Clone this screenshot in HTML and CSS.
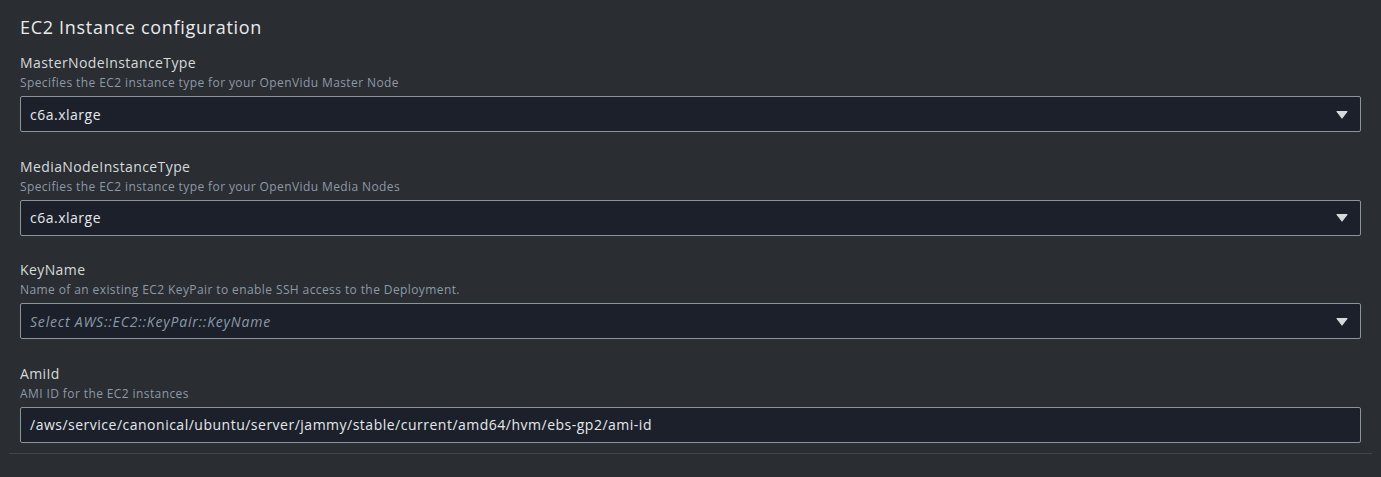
FILE: index.html
```html
<!DOCTYPE html>
<html lang="en">
<head>
<meta charset="utf-8">
<title>EC2 Instance configuration</title>
<link rel="stylesheet" href="styles.css">
</head>
<body>
<section class="panel">
  <h2 class="panel-title">EC2 Instance configuration</h2>
  <div class="fields">
    <div class="field">
      <div class="field-label">MasterNodeInstanceType</div>
      <div class="field-desc">Specifies the EC2 instance type for your OpenVidu Master Node</div>
      <div class="control select">
        <span class="value">c6a.xlarge</span>
        <svg class="caret" width="12" height="9" viewBox="0 0 12 9"><path d="M1 1.5 H11 L6 8 Z" fill="currentColor" stroke="currentColor" stroke-width="1.2" stroke-linejoin="round"/></svg>
      </div>
    </div>
    <div class="field">
      <div class="field-label">MediaNodeInstanceType</div>
      <div class="field-desc">Specifies the EC2 instance type for your OpenVidu Media Nodes</div>
      <div class="control select">
        <span class="value">c6a.xlarge</span>
        <svg class="caret" width="12" height="9" viewBox="0 0 12 9"><path d="M1 1.5 H11 L6 8 Z" fill="currentColor" stroke="currentColor" stroke-width="1.2" stroke-linejoin="round"/></svg>
      </div>
    </div>
    <div class="field">
      <div class="field-label">KeyName</div>
      <div class="field-desc">Name of an existing EC2 KeyPair to enable SSH access to the Deployment.</div>
      <div class="control select">
        <span class="value placeholder">Select AWS::EC2::KeyPair::KeyName</span>
        <svg class="caret" width="12" height="9" viewBox="0 0 12 9"><path d="M1 1.5 H11 L6 8 Z" fill="currentColor" stroke="currentColor" stroke-width="1.2" stroke-linejoin="round"/></svg>
      </div>
    </div>
    <div class="field">
      <div class="field-label">AmiId</div>
      <div class="field-desc">AMI ID for the EC2 instances</div>
      <div class="control">
        <span class="value">/aws/service/canonical/ubuntu/server/jammy/stable/current/amd64/hvm/ebs-gp2/ami-id</span>
      </div>
    </div>
  </div>
</section>
</body>
</html>
```

FILE: styles.css
```css
html, body {
  margin: 0;
  padding: 0;
  background: #2a2d32;
  height: 100%;
}

body {
  font-family: "Open Sans", "Noto Sans", sans-serif;
  color: #d5dbdb;
}

.panel {
  margin: 0 9px;
  padding: 14px 11px 10px;
  border-bottom: 1px solid #41464e;
}

.panel-title {
  margin: 0 0 13px;
  font-size: 18px;
  line-height: 26px;
  font-weight: 400;
  letter-spacing: 0.7px;
  color: #e9ebed;
}

.fields {
  display: flex;
  flex-direction: column;
  gap: 24.67px;
}

.field {
  display: flex;
  flex-direction: column;
}

.field-label {
  font-size: 14px;
  line-height: 20px;
  letter-spacing: 0.4px;
  color: #d5dbdb;
}

.field-desc {
  margin-top: 2px;
  font-size: 12px;
  line-height: 16px;
  letter-spacing: 0.4px;
  color: #8d99a8;
}

.control {
  margin-top: 5px;
  height: 36px;
  box-sizing: border-box;
  border: 1px solid #8a9597;
  border-radius: 2px;
  background: #1b202a;
  display: flex;
  align-items: center;
  padding: 0 12px 0 9px;
}

.value {
  flex: 1;
  font-size: 14px;
  letter-spacing: 0.5px;
  color: #e6e9ec;
}

.placeholder {
  font-style: italic;
  letter-spacing: 0.8px;
  color: #8d99a8;
}

.caret {
  color: #d5dbdb;
  display: block;
}
```
